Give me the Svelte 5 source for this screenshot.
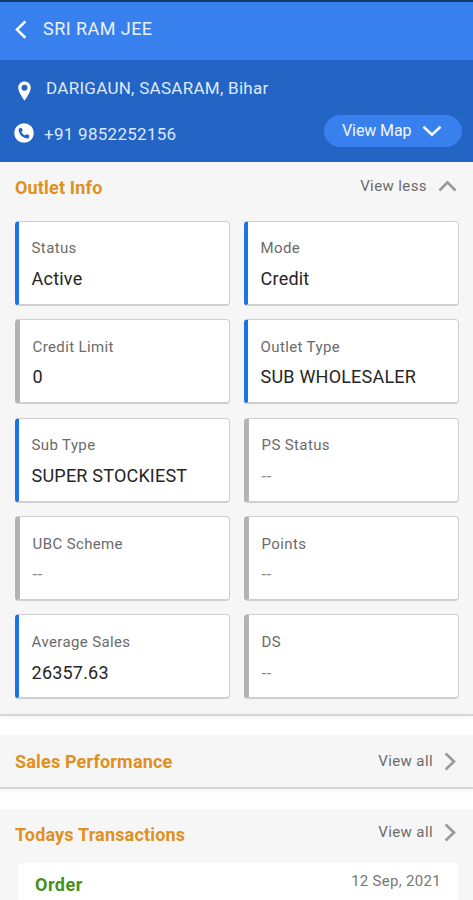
<script>
	let outletInfo = $state([
		{ label: 'Status', value: 'Active' },
		{ label: 'Mode', value: 'Credit' },
		{ label: 'Credit Limit', value: '0', muted: true },
		{ label: 'Outlet Type', value: 'SUB WHOLESALER' },
		{ label: 'Sub Type', value: 'SUPER STOCKIEST' },
		{ label: 'PS Status', value: '' },
		{ label: 'UBC Scheme', value: '' },
		{ label: 'Points', value: '' },
		{ label: 'Average Sales', value: '26357.63' },
		{ label: 'DS', value: '' }
	]);
</script>

{#snippet chevron(path, width, height)}
	<svg class="chevron" {width} {height} viewBox="0 0 {width} {height}">
		<path d={path} />
	</svg>
{/snippet}

<main>
	<header>
		<button class="back" aria-label="Back">
			{@render chevron('M10.4 1.4 2 9.6l8.4 8.2', 12, 20)}
		</button>
		<h1>SRI RAM JEE</h1>
	</header>

	<div class="contact">
		<div class="address">
			<svg width="13" height="20" viewBox="0 0 13 20">
				<path
					fill="#fff"
					fill-rule="evenodd"
					d="M6.5.5C3 .5.2 3.2.2 6.7c0 4.5 6.3 12.8 6.3 12.8s6.3-8.3 6.3-12.8C12.8 3.2 10 .5 6.5.5Zm0 3.2a3 3 0 1 1 0 6 3 3 0 0 1 0-6Z"
				/>
			</svg>
			<span>DARIGAUN, SASARAM, Bihar</span>
		</div>
		<div class="phone">
			<svg width="20" height="20" viewBox="0 0 20 20">
				<circle cx="10" cy="10" r="9.8" fill="#fff" />
				<path
					fill="#2364c4"
					d="M5 5.4 7 4.7q.5-.1.7.4l.9 2.1q.2.5-.2.8l-1 .9q1.2 2.5 3.7 3.7l.9-1.1q.3-.4.8-.2l2.2.9q.5.2.4.7l-.6 2q-.1.5-.6.5C8.6 15.4 4.6 11.4 4.6 6q0-.5.4-.6Z"
				/>
			</svg>
			<span>+91 9852252156</span>
			<button class="map">
				View Map
				{@render chevron('M1.5 1.8 10 9.8l8.5-8', 20, 12)}
			</button>
		</div>
	</div>

	<section class="outlet">
		<div class="heading">
			<h2>Outlet Info</h2>
			<button class="more">View less {@render chevron('M1.5 10.5 9.5 2.3l8 8.2', 19, 12)}</button>
		</div>
		<div class="grid">
			{#each outletInfo as item (item.label)}
				<div class="card" class:inactive={item.muted || !item.value}>
					<div class="label">{item.label}</div>
					<div class="value" class:empty={!item.value}>{item.value || '--'}</div>
				</div>
			{/each}
		</div>
	</section>

	<section class="sales">
		<div class="heading">
			<h2>Sales Performance</h2>
			<button class="more">View all {@render chevron('M1.6 1.5 10 9.5l-8.4 8', 12, 19)}</button>
		</div>
	</section>

	<section class="transactions">
		<div class="heading">
			<h2>Todays Transactions</h2>
			<button class="more">View all {@render chevron('M1.6 1.5 10 9.5l-8.4 8', 12, 19)}</button>
		</div>
		<div class="order">
			<h3>Order</h3>
			<time datetime="2021-09-12">12 Sep, 2021</time>
		</div>
	</section>
</main>

<style>
	:global(body) {
		margin: 0;
		background: #fff;
	}
	main {
		width: 473px;
		height: 900px;
		box-sizing: border-box;
		overflow: hidden;
		border-top: 2px solid #133c6c;
		font-family: Roboto, sans-serif;
	}
	h1,
	h2,
	h3 {
		margin: 0;
	}
	button {
		padding: 0;
		border: none;
		background: none;
		color: inherit;
		font-family: inherit;
	}
	svg {
		display: block;
		flex: none;
	}
	.chevron path {
		fill: none;
		stroke: currentColor;
		stroke-width: 2.6;
	}
	header {
		display: flex;
		align-items: center;
		gap: 16px;
		height: 58px;
		box-sizing: border-box;
		padding: 0 0 4px 15px;
		background: #3880ee;
		color: #fff;
	}
	.back {
		margin-top: 1px;
	}
	h1 {
		margin-top: -1px;
		color: #e9f2ff;
		font-size: 18px;
		font-weight: 400;
		letter-spacing: 0.45px;
	}
	.contact {
		height: 102px;
		box-sizing: border-box;
		padding-top: 16px;
		background: #2364c4;
		color: #dde9fd;
		font-size: 17px;
		letter-spacing: 0.28px;
	}
	.address,
	.phone {
		display: flex;
		align-items: center;
	}
	.address {
		height: 24px;
		padding-left: 18px;
		gap: 15px;
	}
	.address svg {
		margin-top: 5px;
	}
	.phone {
		height: 32px;
		margin-top: 15px;
		padding: 0 11px 0 14px;
		gap: 10px;
	}
	.phone > svg {
		margin-top: 4px;
	}
	.phone span {
		margin-top: 5px;
	}
	.map {
		display: flex;
		align-items: center;
		justify-content: space-between;
		width: 138px;
		height: 32px;
		margin: -1px 0 0 auto;
		padding: 0 20px 0 18px;
		box-sizing: border-box;
		border-radius: 16px;
		background: #3880ee;
		color: #f2f7ff;
		font-size: 16px;
		letter-spacing: -0.1px;
	}
	section {
		box-sizing: border-box;
		background: #f6f6f6;
	}
	.heading {
		display: flex;
		align-items: center;
		justify-content: space-between;
		height: 52px;
		padding: 0 17px 0 15px;
	}
	.outlet .heading {
		height: 50px;
		padding-right: 16px;
	}
	.outlet .more {
		margin-top: -2px;
	}
	h2 {
		color: #e0901c;
		font-size: 18px;
		font-weight: 700;
		letter-spacing: 0.17px;
	}
	.more {
		display: flex;
		align-items: center;
		gap: 11px;
		color: #6b6b6b;
		font-size: 15px;
		letter-spacing: 0.4px;
	}
	.more .chevron {
		color: #999;
	}
	.outlet,
	.sales {
		border-bottom: 2px solid #d4d5d6;
		box-shadow: 0 2px 4px #0000000d;
	}
	.outlet {
		height: 554px;
	}
	.grid {
		display: grid;
		grid-template-columns: 215px 215px;
		grid-auto-rows: 85px;
		gap: 13.4px 14px;
		padding: 8.8px 0 0 15px;
	}
	.card {
		box-sizing: border-box;
		padding: 16.6px 0 0 12.6px;
		border: 1px solid #cfcfcf;
		border-bottom-width: 2px;
		border-left: 4px solid #1a73e8;
		border-radius: 4px;
		background: #fff;
	}
	.inactive {
		border-left: 5px solid #b3b3b3;
	}
	.label {
		color: #6b6b6b;
		font-size: 15px;
		letter-spacing: 0.37px;
		line-height: 20px;
	}
	.value {
		margin-top: 8.7px;
		color: #252525;
		font-size: 18px;
		letter-spacing: 0.2px;
		line-height: 24px;
	}
	.value.empty {
		color: #888;
		font-size: 17px;
	}
	.sales {
		height: 54px;
		margin-top: 19px;
	}
	.transactions {
		height: 91px;
		margin-top: 20px;
	}
	.transactions h2 {
		margin-top: -2px;
	}
	.transactions .more {
		margin-top: -6px;
	}
	.order {
		display: flex;
		justify-content: space-between;
		height: 40px;
		margin: 2px 15px 0 18px;
		padding: 10px 17px 0 17px;
		border-radius: 4px 4px 0 0;
		background: #fff;
	}
	h3 {
		margin-top: 1px;
		color: #44901c;
		font-size: 18px;
		font-weight: 700;
		letter-spacing: 0.5px;
	}
	time {
		margin-top: -1px;
		color: #777;
		font-size: 15px;
		letter-spacing: 0.3px;
	}
</style>
